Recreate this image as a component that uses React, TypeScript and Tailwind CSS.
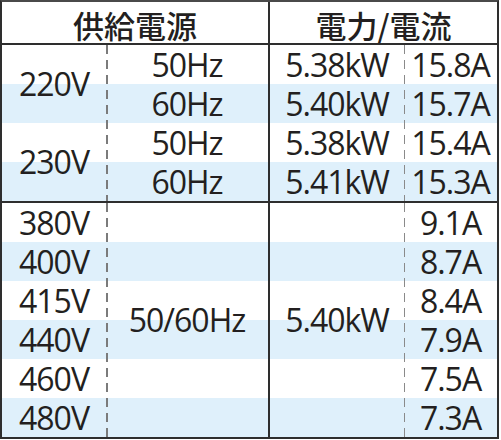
const line = '#2e2e2e';

type Cell = { text: string; col: string; row: string };

const body: Cell[] = [
  { text: '220V', col: 'col-start-1', row: 'row-start-3 row-span-2' },
  { text: '230V', col: 'col-start-1', row: 'row-start-5 row-span-2' },
  { text: '50Hz', col: 'col-start-2', row: 'row-start-3' },
  { text: '60Hz', col: 'col-start-2', row: 'row-start-4' },
  { text: '50Hz', col: 'col-start-2', row: 'row-start-5' },
  { text: '60Hz', col: 'col-start-2', row: 'row-start-6' },
  { text: '5.38kW', col: 'col-start-4', row: 'row-start-3' },
  { text: '5.40kW', col: 'col-start-4', row: 'row-start-4' },
  { text: '5.38kW', col: 'col-start-4', row: 'row-start-5' },
  { text: '5.41kW', col: 'col-start-4', row: 'row-start-6' },
  { text: '15.8A', col: 'col-start-5', row: 'row-start-3' },
  { text: '15.7A', col: 'col-start-5', row: 'row-start-4' },
  { text: '15.4A', col: 'col-start-5', row: 'row-start-5' },
  { text: '15.3A', col: 'col-start-5', row: 'row-start-6' },
  { text: '380V', col: 'col-start-1', row: 'row-start-8' },
  { text: '400V', col: 'col-start-1', row: 'row-start-9' },
  { text: '415V', col: 'col-start-1', row: 'row-start-10' },
  { text: '440V', col: 'col-start-1', row: 'row-start-11' },
  { text: '460V', col: 'col-start-1', row: 'row-start-12' },
  { text: '480V', col: 'col-start-1', row: 'row-start-13' },
  { text: '50/60Hz', col: 'col-start-2', row: 'row-start-8 row-span-6' },
  { text: '5.40kW', col: 'col-start-4', row: 'row-start-8 row-span-6' },
  { text: '9.1A', col: 'col-start-5', row: 'row-start-8' },
  { text: '8.7A', col: 'col-start-5', row: 'row-start-9' },
  { text: '8.4A', col: 'col-start-5', row: 'row-start-10' },
  { text: '7.9A', col: 'col-start-5', row: 'row-start-11' },
  { text: '7.5A', col: 'col-start-5', row: 'row-start-12' },
  { text: '7.3A', col: 'col-start-5', row: 'row-start-13' }
];

const stripes = ['row-start-4', 'row-start-6', 'row-start-9', 'row-start-11', 'row-start-13'];

export default function App() {
  return (
    <div className="w-[501px] h-[440px] bg-white">
      <div
        className="grid w-[499px] grid-cols-[104px_162px_2px_134px_93px] grid-rows-[41px_2px_repeat(4,39px)_2px_repeat(6,39px)] border-2 border-[#2e2e2e] border-t-[#4a4a4a] text-[#231f20] font-['Open_Sans',sans-serif] text-[32px] tracking-[-1px]"
      >
        {stripes.map((r) => (
          <div key={r} className={`${r} col-start-1 col-span-5 bg-[#dff0fb]`} />
        ))}

        {/* dashed separators */}
        <div className="col-start-2 row-start-3 row-span-4 w-[2px] justify-self-start bg-[repeating-linear-gradient(to_bottom,#7b7b7b_0_9px,transparent_9px_15px)]" />
        <div className="col-start-2 row-start-8 row-span-6 w-[2px] justify-self-start bg-[repeating-linear-gradient(to_bottom,#7b7b7b_0_9px,transparent_9px_15px)]" />
        <div className="col-start-5 row-start-3 row-span-4 w-px justify-self-start bg-[repeating-linear-gradient(to_bottom,#8a8a8a_0_9px,transparent_9px_15px)]" />
        <div className="col-start-5 row-start-8 row-span-6 w-px justify-self-start bg-[repeating-linear-gradient(to_bottom,#8a8a8a_0_9px,transparent_9px_15px)]" />

        {/* solid rules */}
        <div className="col-start-1 col-span-5 row-start-2 bg-[#2e2e2e]" />
        <div className="col-start-1 col-span-5 row-start-7 bg-[#2e2e2e]" />
        <div className="col-start-3 row-start-1 row-span-13 bg-[#2e2e2e]" />

        {/* header */}
        <div className="col-start-1 col-span-2 row-start-1 flex items-center justify-center pt-[3px] font-['Noto_Sans_CJK_JP',sans-serif] text-[31px] font-medium tracking-normal leading-none">
          供給電源
        </div>
        <div className="col-start-4 col-span-2 row-start-1 flex items-center justify-center pt-[3px] font-['Noto_Sans_CJK_JP',sans-serif] text-[31px] font-medium tracking-normal leading-none">
          電力/電流
        </div>

        {body.map((c, i) => (
          <div key={i} className={`${c.col} ${c.row} flex items-center justify-center leading-none`}>
            {c.text}
          </div>
        ))}
      </div>
    </div>
  );
}
